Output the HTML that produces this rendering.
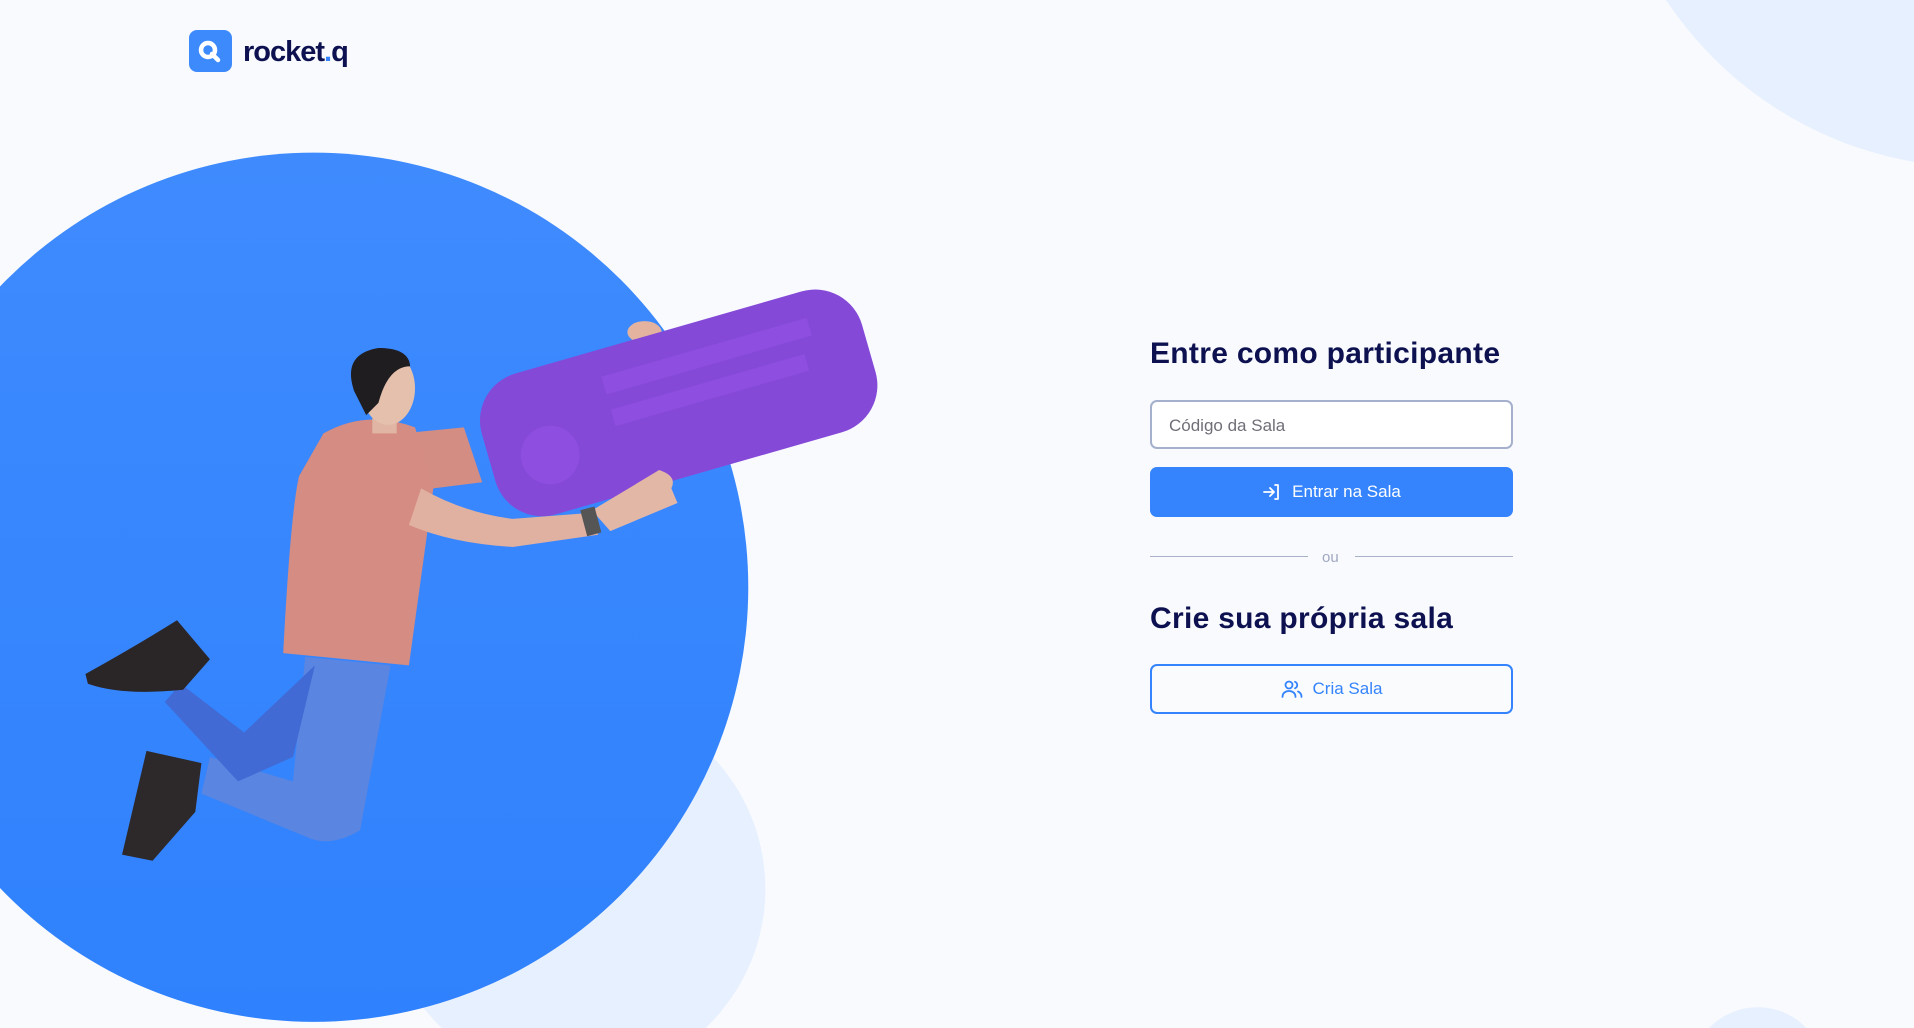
<!DOCTYPE html>
<html><head><meta charset="utf-8"><style>
*{margin:0;padding:0;box-sizing:border-box}
html{overflow:hidden;width:1914px;height:1028px}
body{width:1914px;height:1028px;overflow:hidden;background:#f8fafe;font-family:"Liberation Sans",sans-serif;position:relative}
svg.bg{position:absolute;left:0;top:0}
.logo{position:absolute;left:189px;top:30px;width:43px;height:42px;border-radius:8px;background:#3d8afd}
.brand{position:absolute;left:243px;top:36px;font-size:29px;font-weight:bold;color:#0d1150;letter-spacing:-1px}
.brand span{color:#3583fd}
h2{position:absolute;left:1150px;font-size:30px;font-weight:bold;color:#0d1150;letter-spacing:0.3px;white-space:nowrap}
.inp{position:absolute;left:1150px;top:400px;width:363px;height:49px;border:2px solid #a5b0cc;border-radius:7px;background:#fff;font-size:17px;color:#6f6f78;padding:14px 0 0 17px}
.btn{position:absolute;left:1150px;width:363px;height:50px;border-radius:7px;font-size:17px;display:flex;align-items:center;justify-content:center;gap:10px}
.b1{top:467px;background:#3584fd;color:#fff}
.b2{top:664px;border:2px solid #3584fd;color:#3584fd;background:#f9fbfd;height:50px}
.div{position:absolute;top:556px;height:1px;background:#a9b1c6}
.ou{position:absolute;left:1322px;top:549px;font-size:15px;color:#a0a8c0}
</style></head><body>
<svg class="bg" width="1914" height="1028" viewBox="0 0 1568 842" preserveAspectRatio="none">
<defs><linearGradient id="g" x1="0" y1="0" x2="0" y2="1"><stop offset="0" stop-color="#3f8bfe"/><stop offset="1" stop-color="#2f81fd"/></linearGradient></defs>
<circle cx="1620" cy="-169" r="306" fill="#e7f0fe"/>
<circle cx="1440" cy="880" r="55" fill="#e7f0fe"/>
<circle cx="470" cy="728" r="157" fill="#e7f0fe"/>
<circle cx="257" cy="481" r="356" fill="url(#g)"/>
<ellipse cx="528" cy="272" rx="14" ry="9" fill="#e3b39f"/>
<g transform="translate(556,330) rotate(-16)">
<rect x="-162" y="-60" width="324" height="120" rx="40" fill="#8549d8"/>
<circle cx="-113" cy="12" r="24" fill="#8e4ee0"/>
<rect x="-55" y="-38" width="175" height="15" fill="#8e4ee0"/>
<rect x="-55" y="-10" width="165" height="14" fill="#8e4ee0"/>
</g>
<path d="M330 355 L380 350 L395 395 L355 400Z" fill="#d48d82"/>
<path d="M265 355 Q300 335 340 350 L355 400 L335 545 L232 535 Q238 420 245 390Z" fill="#d58c82"/>
<path d="M345 400 Q380 420 420 425 L485 420 L490 438 L420 448 Q370 445 335 430Z" fill="#e0b0a0"/>
<path d="M485 418 L540 385 Q555 390 550 400 L555 412 L500 435Z" fill="#e3b7a5"/>
<rect x="478" y="416" width="12" height="22" fill="#555" transform="rotate(-15 484 427)"/>
<rect x="305" y="330" width="20" height="25" fill="#e0b5a3"/>
<ellipse cx="318" cy="318" rx="22" ry="30" fill="#e4c0ad"/>
<path d="M290 320 Q280 290 310 285 Q335 285 336 300 Q318 300 310 330 L300 340Z" fill="#1f1d20"/>
<path d="M250 538 L320 545 L295 680 Q270 695 250 685 L165 650 L172 620 L240 640 Z" fill="#5a85e0"/>
<path d="M258 545 L200 600 L148 560 L135 575 L195 640 L240 620Z" fill="#416ad4"/>
<path d="M70 552 Q110 530 145 508 L172 540 L150 565 Q100 570 72 560Z" fill="#2a2527"/>
<path d="M120 615 L165 625 L160 665 L125 705 L100 700Z" fill="#2d2829"/>
</svg>
<div class="logo"><svg width="43" height="42" viewBox="0 0 43 42"><circle cx="19" cy="20" r="7" fill="none" stroke="#fff" stroke-width="4.5"/><path d="M23 24 L29 30" stroke="#fff" stroke-width="4.5" stroke-linecap="round"/></svg></div>
<div class="brand">rocket<span>.</span>q</div>
<h2 style="top:337px">Entre como participante</h2>
<div class="inp">Código da Sala</div>
<div class="btn b1"><svg width="20" height="20" viewBox="0 0 20 20" fill="none" stroke="#fff" stroke-width="1.8" stroke-linecap="round" stroke-linejoin="round"><path d="M2 10h10M8 6l4 4-4 4M13 3h3v14h-3"/></svg>Entrar na Sala</div>
<div class="div" style="left:1150px;width:158px"></div>
<div class="ou">ou</div>
<div class="div" style="left:1355px;width:158px"></div>
<h2 style="top:602px">Crie sua própria sala</h2>
<div class="btn b2"><svg width="22" height="20" viewBox="0 0 22 20" fill="none" stroke="#3584fd" stroke-width="1.8" stroke-linecap="round"><circle cx="8" cy="6" r="3.5"/><path d="M1.5 18c0-4 3-6 6.5-6s6.5 2 6.5 6M14 2.8a3.5 3.5 0 010 6.5M17 12.5c2 .8 3.5 2.8 3.5 5.5"/></svg>Cria Sala</div>
</body></html>
